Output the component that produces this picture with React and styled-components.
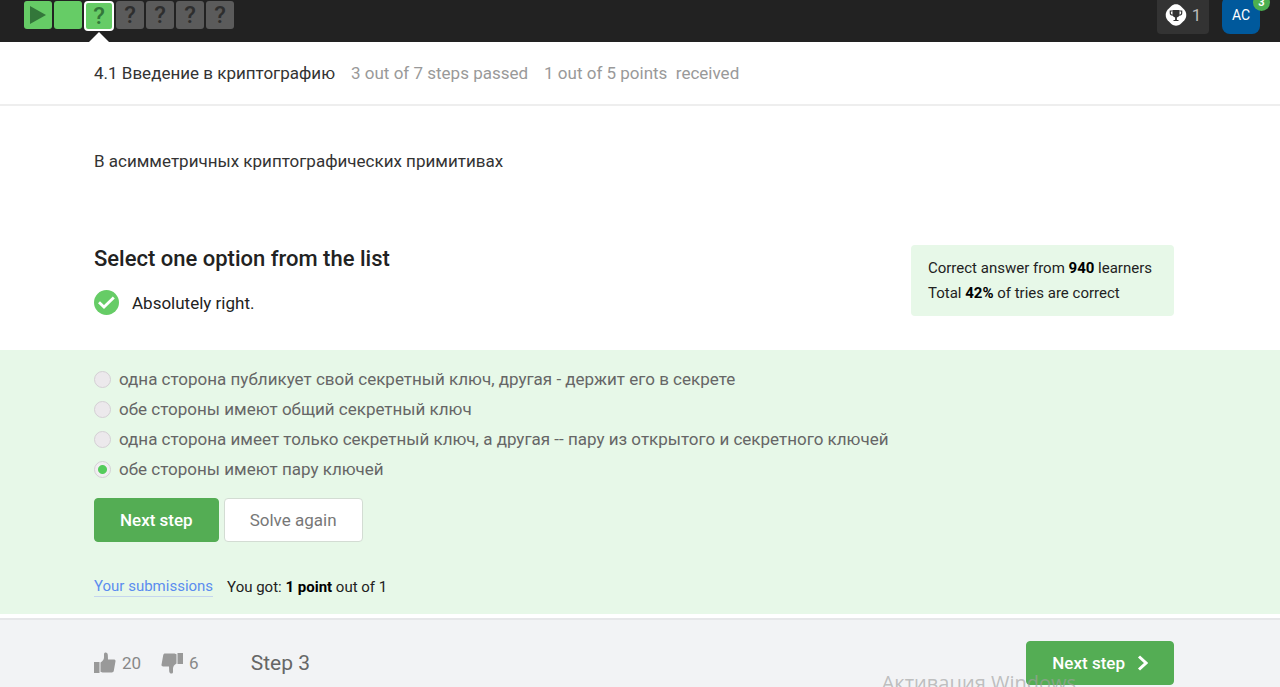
import React, { useState } from "react";
import styled, { createGlobalStyle, css } from "styled-components";

const GlobalStyle = createGlobalStyle`
  *, *::before, *::after { box-sizing: border-box; }
  html, body { margin: 0; background: #fff; }
  body {
    font-family: Roboto, "Liberation Sans", sans-serif;
    font-size: 17px;
    line-height: 24px;
    color: #222;
  }
  button { font: inherit; }
`;

const Page = styled.div`
  display: flex;
  flex-direction: column;
  min-height: 100vh;
  position: relative;
  overflow: hidden;
`;

const TopBar = styled.header`
  display: flex;
  justify-content: space-between;
  height: 42px;
  padding: 0 20px 0 24px;
  background: #222;
  overflow: hidden;
`;

const StepNav = styled.nav`
  display: flex;
  align-items: flex-start;
  gap: 2px;
`;

const StepLink = styled.a`
  display: flex;
  align-items: center;
  justify-content: center;
  width: 28px;
  height: 28px;
  margin-top: 1px;
  border-radius: 3px;
  background: ${(p) => (p.$passed ? "#66cc66" : "#5b5b5b")};
  color: ${(p) => (p.$passed ? "#33773a" : "#2e2e2e")};
  font-size: 24px;
  font-weight: 500;
  line-height: 26px;
  text-decoration: none;
  ${(p) =>
    p.$current &&
    css`
      width: 30px;
      height: 30px;
      border: 2px solid #fff;
      border-radius: 4px;
    `}
`;

const StepSlot = styled.div`
  display: flex;
  flex-direction: column;
  justify-content: space-between;
  align-items: center;
  height: 42px;
`;

const Pointer = styled.span`
  border: 10px solid transparent;
  border-top-width: 0;
  border-bottom-color: #fff;
`;

const Account = styled.div`
  display: flex;
  align-items: flex-end;
  gap: 13px;
  padding-bottom: 8px;
`;

const Score = styled.div`
  display: flex;
  align-items: center;
  justify-content: center;
  gap: 5px;
  width: 52px;
  height: 38px;
  border-radius: 4px;
  background: #333;
  color: #bbb;
  font-size: 17px;
`;

const Avatar = styled.button`
  position: relative;
  width: 38px;
  height: 38px;
  padding: 0;
  border: 0;
  border-radius: 8px;
  background: #00599c;
  color: #fff;
  font-size: 14px;
`;

const Badge = styled.span`
  position: absolute;
  top: -2px;
  right: -10px;
  width: 17px;
  height: 17px;
  border-radius: 50%;
  background: #4caf50;
  font-size: 11px;
  font-weight: 700;
  line-height: 17px;
  text-align: center;
`;

const Column = styled.div`
  padding: 0 106px 0 94px;
`;

const LessonBar = styled(Column)`
  display: flex;
  align-items: center;
  gap: 16px;
  height: 64px;
  border-bottom: 2px solid #eee;
  color: #999;
  white-space: pre;
`;

const LessonTitle = styled.span`
  color: #333;
`;

const Question = styled.p`
  margin: 0;
  padding: 43px 0 72px;
  color: #333;
`;

const Intro = styled.div`
  display: flex;
  justify-content: space-between;
  align-items: flex-start;
  padding-bottom: 34px;
`;

const Heading = styled.h1`
  margin: 0;
  font-size: 22px;
  font-weight: 500;
  line-height: 28px;
`;

const Verdict = styled.p`
  display: flex;
  align-items: center;
  gap: 13px;
  margin: 17px 0 0;
`;

const Stats = styled.div`
  padding: 11px 22px 10px 17px;
  border-radius: 4px;
  background: #e7f8e8;
  font-size: 15px;
  line-height: 25px;

  b { color: #000; }
`;

const Answer = styled(Column)`
  padding-top: 14px;
  padding-bottom: 17px;
  background: #e7f8e8;
`;

const Options = styled.fieldset`
  margin: 0;
  padding: 0;
  border: 0;
  color: #666;
`;

const Option = styled.label`
  display: flex;
  align-items: center;
  gap: 8px;
  line-height: 30px;
`;

const Radio = styled.input`
  appearance: none;
  width: 17px;
  height: 17px;
  margin: 0;
  border: 1px solid #d4d0d4;
  border-radius: 50%;
  background: #ece9ec;

  &:checked {
    background: radial-gradient(circle, #55cc5c 4px, #f1eef1 5px);
  }
`;

const Actions = styled.div`
  display: flex;
  gap: 5px;
  padding: 14px 0 34px;
`;

const Button = styled.button`
  display: flex;
  align-items: center;
  justify-content: center;
  gap: 12px;
  height: 44px;
  padding: 0 25px;
  border: 1px solid ${(p) => (p.$plain ? "#d3dcd3" : "#54ad54")};
  border-radius: 4px;
  background: ${(p) => (p.$plain ? "#fff" : "#54ad54")};
  color: ${(p) => (p.$plain ? "#777" : "#fff")};
  font-weight: ${(p) => (p.$plain ? 400 : 500)};
`;

const Result = styled.div`
  display: flex;
  align-items: center;
  gap: 14px;
  font-size: 15px;
  line-height: 20px;

  b { color: #000; }
`;

const SubmissionsLink = styled.a`
  border-bottom: 1px solid #c5d5ee;
  color: #5b8def;
  text-decoration: none;
`;

const Footer = styled.footer`
  display: flex;
  flex: 1;
  align-items: flex-start;
  justify-content: space-between;
  margin-top: 4px;
  padding: 21px 106px 0 94px;
  border-top: 2px solid #e6e7e9;
  background: #f2f3f5;
`;

const FooterGroup = styled.div`
  display: flex;
  align-items: center;
  height: 44px;
  gap: 20px;
`;

const Vote = styled.button`
  display: flex;
  align-items: center;
  gap: 6px;
  padding: 0;
  border: 0;
  background: none;
  color: #888;
`;

const StepName = styled.span`
  margin-left: 32px;
  color: #666;
  font-size: 21px;
`;

const Watermark = styled.div`
  position: absolute;
  right: 204px;
  bottom: -10px;
  color: rgba(160, 160, 160, 0.65);
  font-family: "Open Sans", sans-serif;
  font-size: 20px;
  line-height: 28px;
  pointer-events: none;
`;

const thumbPath =
  "M0 10h5.500v11H0zM6.500 10.500c2-1.200 3.500-2.800 3.500-5V2c0-2.200 3.600-2.200 3.800.8L14 7.500h5.800c1.200 0 1.900.7 1.700 1.800l-1.700 9.500c-.2 1.200-.9 1.700-2 1.700H8.500l-2-.8z";

const Thumb = ({ down }) => (
  <svg width="22" height="22" viewBox="0 0 22 22" fill="#999" aria-hidden="true">
    <path d={thumbPath} transform={down ? "rotate(180 11 11)" : undefined} />
  </svg>
);

const Trophy = () => (
  <svg width="22" height="22" viewBox="0 0 22 22" aria-hidden="true">
    <path
      d="M11 .3c2 0 3.300.6 4.600 1.700l3.800 3.800c2.500 3 2.500 7.400 0 10.400l-3.800 3.800c-2.700 2.300-6.500 2.300-9.200 0l-3.800-3.800c-2.500-3-2.500-7.400 0-10.400L6.400 2C7.700.9 9 .3 11 .3z"
      fill="#fff"
    />
    <path d="M7.500 6h7v4.500c0 1.800-1.300 2.600-2.600 3V16h1.600v1h-5v-1h1.600v-2.500c-1.300-.4-2.600-1.200-2.600-3z" fill="#333" />
    <path d="M7.500 7H5.300v2c0 1.400 1 2.200 2.500 2.200M14.500 7h2.200v2c0 1.400-1 2.200-2.500 2.200" fill="none" stroke="#333" strokeWidth="1.200" />
  </svg>
);

const Play = () => (
  <svg width="18" height="20" viewBox="0 0 18 20" aria-hidden="true">
    <path d="M1 1l16 9L1 19z" fill="#33773a" />
  </svg>
);

const CheckMark = () => (
  <svg width="25" height="26" viewBox="0 0 25 26" aria-hidden="true">
    <circle cx="12.500" cy="12.500" r="12.500" fill="#66cc66" />
    <path d="M5 12.200l5 4.800 9.800-9.500" fill="none" stroke="#fff" strokeWidth="2.800" />
  </svg>
);

const Chevron = () => (
  <svg width="11" height="16" viewBox="0 0 11 16" aria-hidden="true">
    <path d="M2 1.500l7 6.500-7 6.500" fill="none" stroke="#fff" strokeWidth="3" />
  </svg>
);

const steps = [
  { label: <Play />, name: "Video", passed: true },
  { label: "", name: "Text", passed: true },
  { label: "?", name: "Quiz", passed: true, current: true },
  { label: "?", name: "Quiz" },
  { label: "?", name: "Quiz" },
  { label: "?", name: "Quiz" },
  { label: "?", name: "Quiz" },
];

const options = [
  "одна сторона публикует свой секретный ключ, другая - держит его в секрете",
  "обе стороны имеют общий секретный ключ",
  "одна сторона имеет только секретный ключ, а другая -- пару из открытого и секретного ключей",
  "обе стороны имеют пару ключей",
];

export default function App() {
  const [selected, setSelected] = useState(3);

  return (
    <Page>
      <GlobalStyle />
      <TopBar>
        <StepNav>
          {steps.map((step, i) => (
            <StepSlot key={i}>
              <StepLink href={`#step-${i + 1}`} aria-label={step.name} $passed={step.passed} $current={step.current}>
                {step.label}
              </StepLink>
              {step.current && <Pointer />}
            </StepSlot>
          ))}
        </StepNav>
        <Account>
          <Score>
            <Trophy />1
          </Score>
          <Avatar type="button">
            AC<Badge>3</Badge>
          </Avatar>
        </Account>
      </TopBar>

      <LessonBar>
        <LessonTitle>4.1 Введение в криптографию</LessonTitle>
        <span>3 out of 7 steps passed</span>
        <span>{"1 out of 5 points  received"}</span>
      </LessonBar>

      <Column as="main">
        <Question>В асимметричных криптографических примитивах</Question>
        <Intro>
          <div>
            <Heading>Select one option from the list</Heading>
            <Verdict>
              <CheckMark />
              Absolutely right.
            </Verdict>
          </div>
          <Stats>
            Correct answer from <b>940</b> learners
            <br />
            Total <b>42%</b> of tries are correct
          </Stats>
        </Intro>
      </Column>

      <Answer>
        <Options aria-label="Answer options">
          {options.map((text, i) => (
            <Option key={text}>
              <Radio type="radio" name="answer" checked={selected === i} onChange={() => setSelected(i)} />
              {text}
            </Option>
          ))}
        </Options>
        <Actions>
          <Button type="button">Next step</Button>
          <Button type="button" $plain>
            Solve again
          </Button>
        </Actions>
        <Result>
          <SubmissionsLink href="#submissions">Your submissions</SubmissionsLink>
          <span>
            You got: <b>1 point</b> out of 1
          </span>
        </Result>
      </Answer>

      <Footer>
        <FooterGroup>
          <Vote type="button">
            <Thumb />
            20
          </Vote>
          <Vote type="button">
            <Thumb down />6
          </Vote>
          <StepName>Step 3</StepName>
        </FooterGroup>
        <Button type="button">
          Next step
          <Chevron />
        </Button>
      </Footer>
      <Watermark>Активация Windows</Watermark>
    </Page>
  );
}
